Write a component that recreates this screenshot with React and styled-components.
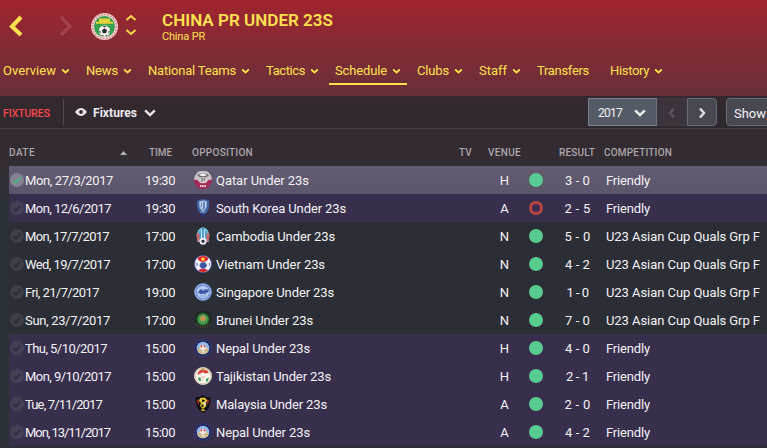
import React, { useLayoutEffect, useRef, useState } from 'react';
import styled, { createGlobalStyle, css } from 'styled-components';

const Global = createGlobalStyle`
  * { box-sizing: border-box; }
  body { margin: 0; overflow: hidden; background: #2c3037; }
`;

/* Tracks a label out or in so that it fills the given width. */
function Fit({ width, children }) {
  const ref = useRef(null);
  const [spacing, setSpacing] = useState(0);
  useLayoutEffect(() => {
    const natural = ref.current.getBoundingClientRect().width;
    setSpacing((width - natural) / children.length);
  }, [width, children]);
  return <FitBox ref={ref} style={{ letterSpacing: `${spacing}px` }}>{children}</FitBox>;
}

const FitBox = styled.span`
  display: inline-block;
  flex: none;
  white-space: nowrap;
`;

const Screen = styled.div`
  width: 767px;
  height: 448px;
  overflow: hidden;
  display: flex;
  flex-direction: column;
  font: 400 13px/16px Roboto, sans-serif;
  color: #f3f2f5;
  background: linear-gradient(#34282f 0, #34282f 96px, #332c33 165px, #2c3037 200px, #2c3037 440px, #2d2f36);
`;

const Header = styled.header`
  flex: none;
  height: 96px;
  background: linear-gradient(#a0242e, #832b35 50%, #672f37);
  color: #ffe14f;
`;

const TitleBar = styled.div`
  display: flex;
  height: 54px;
  padding-left: 9px;
`;

const HistoryArrow = styled.svg`
  flex: none;
  width: 14px;
  height: 22px;
  margin-top: 15px;
  margin-right: ${p => p.$gap}px;
  fill: none;
  stroke: ${p => (p.$off ? '#a2434b' : '#ffe14f')};
  stroke-width: ${p => (p.$off ? 3.6 : 4)};
`;

const Badge = styled.svg`
  flex: none;
  width: ${p => p.$size}px;
  height: ${p => p.$size}px;
  display: block;
`;

const ClubBadge = styled(Badge)`
  margin-top: 13px;
`;

const Stepper = styled.svg`
  flex: none;
  width: 12px;
  height: 24px;
  margin: 13px 25px 0 7px;
  fill: none;
  stroke: #ffd84c;
  stroke-width: 2;
`;

const Titles = styled.div`
  display: flex;
  flex-direction: column;
  align-items: flex-start;
  padding-top: 10px;
`;

const Title = styled.h1`
  margin: 0;
  font-size: 17px;
  line-height: 20px;
  font-weight: 600;
`;

const Subtitle = styled.div`
  font-size: 11px;
  line-height: 13px;
`;

const Nav = styled.nav`
  display: flex;
  gap: 16px;
  height: 31px;
  padding-left: 3px;
`;

const NavItem = styled.div`
  display: flex;
  flex: none;
  align-items: center;
  gap: 5px;
  padding-top: 3px;
  margin-right: ${p => (p.$plain ? 5 : 0)}px;
  ${p => p.$active && css`
    margin-left: -6px;
    margin-right: -6px;
    padding: 5px 6px 0;
    border-bottom: 2px solid #ffe14f;
  `}
`;

const Caret = styled.svg`
  flex: none;
  width: ${p => p.$w || 9}px;
  height: 8px;
  fill: none;
  stroke: currentColor;
  stroke-width: ${p => p.$bold || 1.7};
`;

const Toolbar = styled.div`
  flex: none;
  display: flex;
  height: 33px;
  padding: 2px 0 2px 3px;
  background: linear-gradient(#34292f, #2f292f);
  border-bottom: 1px solid #433d44;
  align-items: center;
`;

const Section = styled.div`
  width: 61px;
  height: 26px;
  padding-top: 4px;
  display: flex;
  align-items: center;
  flex: none;
  font-size: 10.5px;
  font-weight: 500;
  color: #f8484d;
  border-right: 1px solid #51494f;
`;

const ViewPicker = styled.div`
  flex: none;
  width: 524px;
  display: flex;
  align-items: center;
  padding: 1px 0 0 11px;
  font-size: 12px;
  font-weight: 700;
  color: #eceaee;
`;

const Eye = styled.svg`
  width: 12px;
  height: 8px;
  margin-right: 6px;
  margin-top: -1px;
`;

const Spaced = styled.span`
  display: flex;
  align-items: center;
  margin-left: ${p => p.$by}px;
`;

const YearSelect = styled.div`
  flex: none;
  display: flex;
  align-items: center;
  width: 69px;
  height: 28px;
  padding: 2px 0 0 9px;
  font-size: 12px;
  background: #555b66;
  border: 1px solid #79808c;
  border-right-color: #6b727e;
`;

const StepButton = styled.div`
  flex: none;
  display: flex;
  align-items: center;
  justify-content: center;
  width: 30px;
  height: 28px;
  padding-top: 2px;
  color: ${p => (p.$off ? '#5b545b' : '#dddce0')};
  background: ${p => (p.$off ? '#3b343c' : '#49474f')};
  border: 1px solid ${p => (p.$off ? '#3f3840' : '#646a76')};
  border-radius: ${p => (p.$off ? '0' : '0 4px 4px 0')};
`;

const Angle = styled.svg`
  width: 8px;
  height: 12px;
  fill: none;
  stroke: currentColor;
  stroke-width: 2.5;
`;

const ShowButton = styled.div`
  flex: none;
  width: 60px;
  height: 28px;
  margin-left: 9px;
  padding: 3px 0 0 7px;
  display: flex;
  align-items: center;
  background: #49474f;
  border: 1px solid #646a76;
  border-radius: 4px;
`;

const Heads = styled.div`
  flex: none;
  display: grid;
  grid-template-columns: 111px 29px 43px 267px 29px 71px 45px 1fr;
  align-items: center;
  justify-items: start;
  height: 37px;
  padding: 11px 0 0 9px;
  font-size: 10px;
  font-weight: 500;
  color: #aaa6aa;
`;

const SortMark = styled.svg`
  width: 7px;
  height: 4px;
  fill: #b4b1b5;
`;

const tones = {
  selected: 'linear-gradient(#625b72, #5c566c)',
  friendly: '#382f4d',
  cup: '#2b2e34',
};

const Row = styled.div`
  flex: none;
  display: grid;
  grid-template-columns: 16px 120px 49px 22px 273px 31px 32px 54px 1fr;
  align-items: center;
  height: 28px;
  margin-left: 9px;
  background: ${p => tones[p.$tone]};
`;

const Cell = styled.div`
  padding-top: 2px;
  white-space: nowrap;
`;

const Centered = styled(Cell)`
  text-align: center;
`;

const Score = styled(Cell)`
  text-align: center;
  padding-right: 3px;
`;

const Form = styled.div`
  width: 14px;
  height: 14px;
  margin-left: 9px;
  border-radius: 50%;
  background: ${p => (p.$lost ? 'transparent' : '#57cb91')};
  border: ${p => (p.$lost ? '3px solid #bd4446' : '0')};
`;

const Check = styled.svg`
  width: 14px;
  height: 14px;
  margin-left: 1px;
  display: block;
`;

const Down = ({ wide }) => wide
  ? <Caret $w={12} $bold={2.4} viewBox="0 0 12 8"><path d="M1.2 1.3 6 6l4.8-4.7" /></Caret>
  : <Caret viewBox="0 0 9 8"><path d="M1.2 2.5 4.5 5.5l3.3-3" /></Caret>;

const crests = {
  qatar: <>
    <circle cx="9" cy="9" r="9" fill="#a3285b" />
    <path d="M0 8.500A9 9 0 0 1 18 8.500L14.500 9 12 12H6L3.500 9z" fill="#c9c5c6" />
    <path d="M3 4.500Q5 1.500 9 3q4-1.500 6 1.500l-3.500 2h-5z" fill="#716b6e" />
    <path d="M5 4q4-2.500 8 0l-2 1H7z" fill="#f1eeee" />
    <path d="M7 6.500h4l.5 3L9 13 6.500 9.500z" fill="#dcd8d7" />
    <path d="M7.500 7h1v4h-1zm2.200 0h1v3h-1z" fill="#5d565a" />
    <path d="M6 14h1.600v2H6zm2.200 0h1.600v2H8.200zm2.200 0H12v2h-1.600z" fill="#ecd4dc" />
  </>,
  korea: <>
    <path d="M3 1.500Q9-1 15 1.500q1 8-2 11.500L9 15.500 5 13Q2 9 3 1.500" fill="#3f62a3" />
    <path d="M5 2.500q4-2 8 0L12.500 9 9 13 5.500 9z" fill="#a9bfdc" />
    <path d="M8 3h2.500l1 4L9.500 11 7 7z" fill="#5f80b8" />
    <path d="M8.500 3v6M11.500 4v4" stroke="#dde6f0" strokeWidth=".8" />
    <path d="M6 13h6" stroke="#7e9aca" />
    <path d="M6.500 16.500h5" stroke="#26397a" strokeWidth="2" />
  </>,
  cambodia: <>
    <path d="M4 3.500Q9-3 14 3.500L15.500 8l-1 7h-11l-1-7z" fill="#75bfdf" />
    <path d="M2.500 6.500h3v8h-2zm10 0h3l-1 8h-2z" fill="#e0605c" />
    <path d="M9 1v11M6 4v8M12 4v8" stroke="#2f76a8" strokeWidth=".9" />
    <path d="M7.500 3v8M10.500 3v8" stroke="#cae9ef" strokeWidth=".9" />
    <circle cx="9" cy="14.200" r="3.500" fill="#f2f2f2" />
    <path d="m9 12.500 1.800 1.300-.8 2H8l-.8-2z" fill="#202c3b" />
  </>,
  vietnam: <>
    <circle cx="9" cy="9" r="9" fill="#5463b0" />
    <circle cx="9" cy="9" r="8.100" fill="#f7f5fa" />
    <path d="M3.500 3.200A8 8 0 0 1 14.500 3.200Q13 7 9 7T3.500 3.200" fill="#dd2429" />
    <path d="M4 15.200Q9 12 14 15.200q-5 3.800-10 0" fill="#d3262f" />
    <path d="m7 7.500 4-.3 2.200 3L11 13.500H7.300L5.300 10.500z" fill="#3a55a6" />
    <path d="m1.500 7.500 2.500 1-1 3.500zm15 0-2 1 1 3.500z" fill="#7f8cc6" />
    <path d="m9 1.800.8 1.500 1.700.2-1.300 1.100.3 1.700L9 5.500l-1.500.8.300-1.700-1.300-1.100 1.700-.2z" fill="#ffdc42" />
  </>,
  singapore: <>
    <circle cx="9" cy="9" r="9" fill="#6785cb" />
    <circle cx="9" cy="9" r="7.700" fill="none" stroke="#c9d8f2" strokeDasharray="1.300 .8" />
    <circle cx="9" cy="9" r="6.300" fill="#b3c8ee" />
    <path d="m3.500 10.500 2.500-4h3l-1 1.200h1.500l1-1.200h4.500l-1 3h-2l-.5 1.500h-2l.5-2-1.500 2H5.500l.5-1.200z" fill="#3856a5" />
    <path d="M6 13h6" stroke="#7f99d2" />
  </>,
  brunei: <>
    <path d="M3 2.500Q9-2.500 15 2.500q3 5 1 11-7 6.500-14 0-2-6 1-11" fill="#18221b" />
    <circle cx="9" cy="8.300" r="6.700" fill="#2c5a33" />
    <circle cx="9" cy="8.300" r="5.300" fill="#449a4e" />
    <circle cx="9" cy="7.600" r="3" fill="#a89c4d" />
    <circle cx="9" cy="7.400" r="1.800" fill="#d08b54" />
    <path d="M1.500 12.500q7.500 7.500 15 0" fill="none" stroke="#5d5430" strokeWidth="1.300" strokeDasharray="1.500 1" />
  </>,
  nepal: <>
    <circle cx="9" cy="9" r="9" fill="#1b2462" />
    <circle cx="9" cy="9" r="8.200" fill="none" stroke="#615f86" strokeWidth="1" strokeDasharray="1.200 1.100" />
    <circle cx="9" cy="9" r="6.300" fill="#94b7ea" />
    <path d="M3 10.500 6.500 8 9 9.500 11.500 8l3.500 2.500Q14 15.300 9 15.300T3 10.500" fill="#cdb98f" />
    <path d="m5.500 9.500 1-4L9 6.500l2.500-1 1 4-3.500 2z" fill="#f0e6e2" />
    <path d="M6.500 6.200h1.600v2H6.500zm3.400 0h1.600v2H9.900z" fill="#c8403f" />
    <path d="M7.500 11.500h3v2h-3z" fill="#e5ddd2" />
  </>,
  tajikistan: <>
    <circle cx="9" cy="9" r="9" fill="#c9c2a8" />
    <circle cx="9" cy="9" r="8.300" fill="none" stroke="#f5efdd" strokeDasharray="1.400 1.200" />
    <circle cx="9" cy="9" r="7.300" fill="#fbf7ec" />
    <path d="M3.500 8Q4 2.500 9 2.500T14.500 6L11 6.500l-2-1.500-2.500 1.500z" fill="#da4136" />
    <path d="M7.500 1.200h3v2h-3z" fill="#c5a64f" />
    <path d="m4 11 2.500-1 .5 4H5zm8 1 3-1.500-1.500 4H12z" fill="#36965a" />
    <path d="M8 9h3l-1 2H8zm.5 3h1.500v2H8.500z" fill="#e9c9ae" />
  </>,
  malaysia: <>
    <path d="M1.500 2q4 1 7.500-2 3.500 3 7.500 2 1 11.500-7.500 16Q.5 13.500 1.500 2" fill="#12110f" />
    <path d="M2.500 6 5 4v7zm13 0L13 4v6z" fill="#9c2b2a" />
    <path d="m6 3 5-.5L13.500 6l-2 2 1 3L9 14l-3-3 1-3-2-2z" fill="#e0c63b" />
    <path d="m8 4.500 3 .5-1 2H8zm-.5 5h2v2.500h-2z" fill="#24211b" />
    <path d="m9.500 6.500 3 2-2.500 2.500z" fill="#ece6cf" />
    <path d="M7.300 14.300h3.400v1.700H7.300z" fill="#d3b239" />
  </>,
};

const nav = [
  ['Overview', 53], ['News', 32], ['National Teams', 88], ['Tactics', 39], ['Schedule', 52],
  ['Clubs', 32], ['Staff', 28], ['Transfers', 52], ['History', 39],
];

const fixtures = [
  ['Mon, 27/3/2017', 88, '19:30', 'qatar', 'Qatar Under 23s', 93, 'H', '3 - 0', 25],
  ['Mon, 12/6/2017', 86, '19:30', 'korea', 'South Korea Under 23s', 130, 'A', '2 - 5', 26],
  ['Mon, 17/7/2017', 84, '17:00', 'cambodia', 'Cambodia Under 23s', 119, 'N', '5 - 0', 26],
  ['Wed, 19/7/2017', 85, '17:00', 'vietnam', 'Vietnam Under 23s', 109, 'N', '4 - 2', 25],
  ['Fri, 21/7/2017', 74, '19:00', 'singapore', 'Singapore Under 23s', 118, 'N', '1 - 0', 22],
  ['Sun, 23/7/2017', 85, '17:00', 'brunei', 'Brunei Under 23s', 97, 'N', '7 - 0', 25],
  ['Thu, 5/10/2017', 82, '15:00', 'nepal', 'Nepal Under 23s', 94, 'H', '4 - 0', 25],
  ['Mon, 9/10/2017', 86, '15:00', 'tajikistan', 'Tajikistan Under 23s', 115, 'H', '2 - 1', 23],
  ['Tue, 7/11/2017', 77, '15:00', 'malaysia', 'Malaysia Under 23s', 111, 'A', '2 - 0', 26],
  ['Mon, 13/11/2017', 85, '15:00', 'nepal', 'Nepal Under 23s', 94, 'A', '4 - 2', 25],
];

function Fixture({ data, selected }) {
  const [date, dateW, time, crest, team, teamW, venue, score, scoreW] = data;
  const cup = venue === 'N';
  return (
    <Row $tone={selected ? 'selected' : cup ? 'cup' : 'friendly'}>
      <Check viewBox="0 0 14 14">
        <circle cx="7" cy="7" r="7" fill={selected ? '#878093' : cup ? '#3d4046' : '#474055'} />
        <path d="m3.500 7.500 2.300 2.200 4.700-5" fill="none" strokeWidth="1.700"
          stroke={selected ? '#42b685' : cup ? '#292c32' : '#302a40'} />
      </Check>
      <Cell><Fit width={dateW}>{date}</Fit></Cell>
      <Cell><Fit width={30}>{time}</Fit></Cell>
      <Badge $size={18} viewBox="0 0 18 18">{crests[crest]}</Badge>
      <Cell><Fit width={teamW}>{team}</Fit></Cell>
      <Centered>{venue}</Centered>
      <Form $lost={score === '2 - 5'} />
      <Score><Fit width={scoreW}>{score}</Fit></Score>
      <Cell>{cup ? <Fit width={154}>U23 Asian Cup Quals Grp F</Fit> : <Fit width={44}>Friendly</Fit>}</Cell>
    </Row>
  );
}

export default function App() {
  return (
    <Screen>
      <Global />
      <Header>
        <TitleBar>
          <HistoryArrow $gap={36} viewBox="0 0 14 22"><path d="M12 2 3 11.500 12 20" /></HistoryArrow>
          <HistoryArrow $off $gap={18} viewBox="0 0 14 22"><path d="m2 2 9 9.500L2 20" /></HistoryArrow>
          <ClubBadge $size={27} viewBox="0 0 27 27">
            <circle cx="13.500" cy="13.500" r="13.500" fill="#f1d3d3" />
            <circle cx="13.500" cy="13.500" r="12" fill="none" stroke="#dc8388" strokeWidth="1.600" strokeDasharray="1.600 1.500" />
            <circle cx="13.500" cy="13.500" r="10.500" fill="#35a04c" />
            <path d="M8 5.500h11v3.200h3v2H5v-2h3z" fill="#f1dc3c" />
            <path d="M8 7.200h11M6 9.800h15" stroke="#c3be34" strokeWidth=".7" />
            <circle cx="13.500" cy="18" r="5.700" fill="#f6f6f4" />
            <path d="m13.500 15.300 2.600 1.900-1 3h-3.200l-1-3zM8 17.500l1.700 1-.5 2.500M19 17.500l-1.700 1 .5 2.500M11 13h5l-2.500 1.200zM10.500 22.500l1.300-.8 1 1.500M16.500 22.500l-1.300-.8-1 1.500" fill="#2c302e" />
          </ClubBadge>
          <Stepper viewBox="0 0 12 24"><path d="m1.500 7 4.500-4 4.500 4M1.500 17 6 21l4.500-4" /></Stepper>
          <Titles>
            <Title><Fit width={171}>CHINA PR UNDER 23S</Fit></Title>
            <Subtitle><Fit width={43}>China PR</Fit></Subtitle>
          </Titles>
        </TitleBar>
        <Nav>
          {nav.map(([name, w]) => (
            <NavItem key={name} $active={name === 'Schedule'} $plain={name === 'Transfers'}>
              <Fit width={w}>{name}</Fit>
              {name !== 'Transfers' && <Down />}
            </NavItem>
          ))}
        </Nav>
      </Header>
      <Toolbar>
        <Section><Fit width={47}>FIXTURES</Fit></Section>
        <ViewPicker>
          <Eye viewBox="0 0 12 8">
            <path d="M0 4Q3 0 6 0t6 4q-3 4-6 4T0 4" fill="#e6e4e8" />
            <circle cx="6" cy="4" r="1.900" fill="#34292f" />
          </Eye>
          <Fit width={44}>Fixtures</Fit>
          <Spaced $by={7}><Down wide /></Spaced>
        </ViewPicker>
        <YearSelect>
          <Fit width={24}>2017</Fit>
          <Spaced $by={12}><Down wide /></Spaced>
        </YearSelect>
        <StepButton $off><Angle viewBox="0 0 8 12"><path d="M6 1.500 2 6l4 4.500" /></Angle></StepButton>
        <StepButton><Angle viewBox="0 0 8 12"><path d="m2 1.500 4 4.500-4 4.500" /></Angle></StepButton>
        <ShowButton><Fit width={32}>Show</Fit></ShowButton>
      </Toolbar>
      <Heads>
        <Fit width={26}>DATE</Fit>
        <SortMark viewBox="0 0 7 4"><path d="M3.500 0 7 4H0z" /></SortMark>
        <Fit width={23}>TIME</Fit>
        <Fit width={61}>OPPOSITION</Fit>
        <Fit width={13}>TV</Fit>
        <Fit width={33}>VENUE</Fit>
        <Fit width={36}>RESULT</Fit>
        <Fit width={68}>COMPETITION</Fit>
      </Heads>
      {fixtures.map((f, i) => <Fixture key={i} data={f} selected={i === 0} />)}
    </Screen>
  );
}
